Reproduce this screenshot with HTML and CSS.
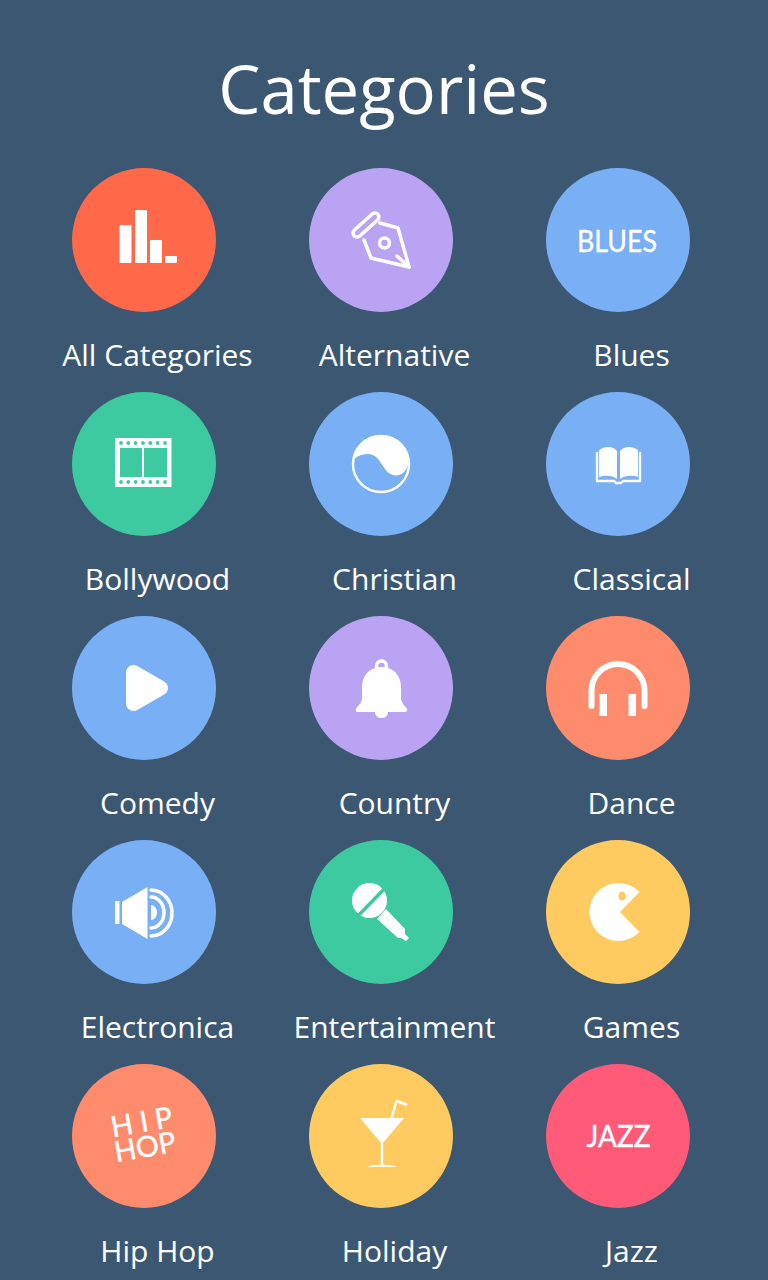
FILE: index.html
```html
<!DOCTYPE html>
<html lang="en">

<head>
    <meta charset="UTF-8">
    <meta name="viewport" content="width=device-width, initial-scale=1.0">
    <title>Categories</title>
    <link rel="stylesheet" href="styles.css">
</head>

<body>

    <h1 class="title">Categories</h1>

    <div class="grid">

        <div class="category">
            <svg class="circle red" viewBox="0 0 144 144">
                <rect class="solid" x="47.5" y="57" width="12" height="38" rx="1"/>
                <rect class="solid" x="63" y="42" width="12" height="53" rx="1"/>
                <rect class="solid" x="78" y="72" width="12" height="23" rx="1"/>
                <rect class="solid" x="93" y="88" width="12" height="7" rx="1"/>
            </svg>
            <div class="label">All Categories</div>
        </div>

        <div class="category">
            <svg class="circle purple" viewBox="0 0 144 144">
                <path class="line" d="M55 72L62 90L100 99L89 60L71 55"/>
                <rect class="line" x="41" y="53" width="32" height="8" rx="4" transform="rotate(-42 57 57)"/>
                <circle class="line" cx="75.5" cy="75" r="5"/>
                <path class="line" d="M100 99L88 88"/>
            </svg>
            <div class="label">Alternative</div>
        </div>

        <div class="category">
            <svg class="circle blue" viewBox="0 0 144 144">
                <text class="word" x="71" y="84" textLength="80" lengthAdjust="spacingAndGlyphs">BLUES</text>
            </svg>
            <div class="label">Blues</div>
        </div>

        <div class="category">
            <svg class="circle green" viewBox="0 0 144 144">
                <path class="solid" fill-rule="evenodd" d="M43 46H99.5V95H43ZM48 56V85H70V56ZM72 56V85H95V56Z"/>
                <g class="holes">
                    <circle cx="49" cy="51" r="1.9"/><circle cx="56.3" cy="51" r="1.9"/><circle cx="63.6" cy="51" r="1.9"/><circle cx="71" cy="51" r="1.9"/>
                    <circle cx="78.3" cy="51" r="1.9"/><circle cx="85.6" cy="51" r="1.9"/><circle cx="93" cy="51" r="1.9"/>
                    <circle cx="49" cy="90" r="1.9"/><circle cx="56.3" cy="90" r="1.9"/><circle cx="63.6" cy="90" r="1.9"/><circle cx="71" cy="90" r="1.9"/>
                    <circle cx="78.3" cy="90" r="1.9"/><circle cx="85.6" cy="90" r="1.9"/><circle cx="93" cy="90" r="1.9"/>
                </g>
            </svg>
            <div class="label">Bollywood</div>
        </div>

        <div class="category">
            <svg class="circle blue" viewBox="0 0 144 144">
                <circle class="line thin" cx="72" cy="72" r="28"/>
                <path class="solid" d="M44 69C46 54 57 43 72 43C88 43 100.5 56 100 70C98 80 91 85 84 83C73 80 72 62 59 62C52 62 46 65 44 69Z"/>
            </svg>
            <div class="label">Christian</div>
        </div>

        <div class="category">
            <svg class="circle blue" viewBox="0 0 144 144">
                <path class="solid" d="M53 58C59 54 67 54 71 59V87C66 83 59 83 53 85Z"/>
                <path class="solid" d="M92 58C86 54 78 54 74 59V87C79 83 86 83 92 85Z"/>
                <path class="line thin" d="M51 61V89H68L70 91H75L77 89H94V61"/>
            </svg>
            <div class="label">Classical</div>
        </div>

        <div class="category">
            <svg class="circle blue" viewBox="0 0 144 144">
                <path class="solid rounded" d="M61.500 56.500L88.500 72L61.500 87.500Z"/>
            </svg>
            <div class="label">Comedy</div>
        </div>

        <div class="category">
            <svg class="circle purple" viewBox="0 0 144 144">
                <circle class="line" cx="72.5" cy="50" r="5"/>
                <path class="solid" d="M72.5 51C61 51 53 59 53 71V82C53 86 50 89 47.5 92C46 94 47 96 49 96H96C98 96 99 94 97.5 92C95 89 92 86 92 82V71C92 59 84 51 72.5 51Z"/>
                <path class="solid" d="M66 96H79C79 104 66 104 66 96Z"/>
            </svg>
            <div class="label">Country</div>
        </div>

        <div class="category">
            <svg class="circle salmon" viewBox="0 0 144 144">
                <path class="line heavy" d="M45.500 90V74.500A26.500 26.500 0 0 1 98.500 74.500V90"/>
                <rect class="solid" x="53.500" y="78" width="7.500" height="22"/>
                <rect class="solid" x="82.500" y="78" width="7.500" height="22"/>
            </svg>
            <div class="label">Dance</div>
        </div>

        <div class="category">
            <svg class="circle blue" viewBox="0 0 144 144">
                <rect class="solid" x="43" y="61" width="4.500" height="23" rx="1"/>
                <path class="solid" d="M50 62L75.500 47V99L50 84Z"/>
                <path class="line" d="M79 50A21 23 0 0 1 79 96"/>
                <path class="line" d="M79 57A13 15.500 0 0 1 79 88"/>
                <path class="solid" d="M79 65A6 7.500 0 0 1 79 80Z"/>
            </svg>
            <div class="label">Electronica</div>
        </div>

        <div class="category">
            <svg class="circle green" viewBox="0 0 144 144">
                <circle class="solid" cx="60.500" cy="60.500" r="17.500"/>
                <path class="gap" d="M46 79L79 45"/>
                <path class="solid" d="M77 69L68 79L89 98L92 98L97 101L100 98L96 94L96 89Z"/>
            </svg>
            <div class="label">Entertainment</div>
        </div>

        <div class="category">
            <svg class="circle yellow" viewBox="0 0 144 144">
                <path class="solid" d="M93.500 52A29 29 0 1 0 93.500 92L74 72Z"/>
                <ellipse class="eye" cx="76" cy="56" rx="3.500" ry="4.500"/>
            </svg>
            <div class="label">Games</div>
        </div>

        <div class="category">
            <svg class="circle salmon" viewBox="0 0 144 144">
                <g transform="rotate(-10 72 72)">
                    <text class="word hand" x="72" y="68" textLength="62" lengthAdjust="spacing">HIP</text>
                    <text class="word hand" x="71" y="93" textLength="62" lengthAdjust="spacingAndGlyphs">HOP</text>
                </g>
            </svg>
            <div class="label">Hip Hop</div>
        </div>

        <div class="category">
            <svg class="circle yellow" viewBox="0 0 144 144">
                <path class="solid" d="M51 54H95L73 80Z"/>
                <path class="line thin" d="M73 78V102"/>
                <path class="solid" d="M58 103C64 100 82 100 88 103Z"/>
                <path class="line thin" d="M82.500 54L87.500 37L97 40.500"/>
            </svg>
            <div class="label">Holiday</div>
        </div>

        <div class="category">
            <svg class="circle pink" viewBox="0 0 144 144">
                <text class="word" x="72.500" y="83" textLength="64" lengthAdjust="spacingAndGlyphs">JAZZ</text>
            </svg>
            <div class="label">Jazz</div>
        </div>

    </div>

</body>

</html>
```

FILE: styles.css
```css
body {
    margin: 0;
    height: 1280px;
    overflow: hidden;
    background-color: #3c5772;
    color: #fff;
    font-family: "Open Sans", sans-serif;
}

.title {
    margin: 0;
    height: 168px;
    padding-top: 43px;
    box-sizing: border-box;
    font-size: 67px;
    line-height: 90px;
    font-weight: 400;
    text-align: center;
}

.grid {
    display: grid;
    grid-template-columns: repeat(3, 237px);
    grid-auto-rows: 224px;
    padding-left: 39px;
}

.category {
    text-align: center;
}

.circle {
    display: block;
    width: 144px;
    height: 144px;
    margin-left: 33px;
    border-radius: 50%;
}

.label {
    margin-top: 23px;
    font-size: 30px;
    line-height: 40px;
}

.red { background-color: #ff6849; }
.purple { background-color: #baa3f2; }
.blue { background-color: #78aff5; }
.green { background-color: #3ecaa0; }
.salmon { background-color: #ff8b6d; }
.yellow { background-color: #ffcb61; }
.pink { background-color: #ff5b79; }

.solid { fill: #fff; }

.rounded {
    stroke: #fff;
    stroke-width: 15;
    stroke-linejoin: round;
}

.line {
    fill: none;
    stroke: #fff;
    stroke-width: 3.5;
    stroke-linecap: round;
    stroke-linejoin: round;
}

.line.thin { stroke-width: 2.4; }
.line.heavy { stroke-width: 6; }

.holes { fill: #3ecaa0; }
.gap { stroke: #3ecaa0; stroke-width: 3.5; }
.eye { fill: #ffcb61; }

.word {
    fill: #fff;
    stroke: #fff;
    stroke-width: 0.4;
    font-family: Lato, sans-serif;
    font-size: 30px;
    text-anchor: middle;
}

.word.hand {
    font-size: 29px;
    font-weight: 400;
}
```
